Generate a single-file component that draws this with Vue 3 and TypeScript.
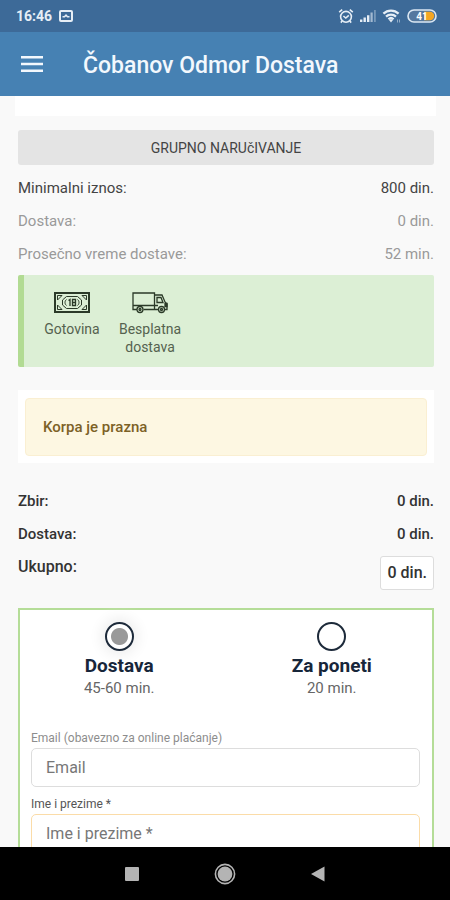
<script setup lang="ts">
import { ref } from 'vue'

interface Row {
  label: string
  value: string
  muted?: boolean
}

interface Mode {
  id: string
  title: string
  time: string
}

const terms: Row[] = [
  { label: 'Minimalni iznos:', value: '800 din.' },
  { label: 'Dostava:', value: '0 din.', muted: true },
  { label: 'Prosečno vreme dostave:', value: '52 min.', muted: true },
]

const totals: Row[] = [
  { label: 'Zbir:', value: '0 din.' },
  { label: 'Dostava:', value: '0 din.' },
]

const modes: Mode[] = [
  { id: 'delivery', title: 'Dostava', time: '45-60 min.' },
  { id: 'pickup', title: 'Za poneti', time: '20 min.' },
]

const mode = ref('delivery')
const email = ref('')
const fullName = ref('')
</script>

<template>
  <div class="screen">
    <div class="status">
      <div class="status-side">
        <span class="clock">16:46</span>
        <svg viewBox="0 0 14 12" width="14" height="12">
          <rect x="1" y="1" width="12" height="10" rx="1" fill="none" stroke="currentColor" stroke-width="2" />
          <path d="M3.500 6.800h2l1.500-1.600 1.500 1.600h2" fill="none" stroke="currentColor" stroke-width="1.600" />
        </svg>
      </div>
      <div class="status-side status-right">
        <svg viewBox="0 0 16 16" width="16" height="16" fill="none" stroke="currentColor" stroke-width="1.6">
          <circle cx="8" cy="8.8" r="5.4" />
          <path d="M1.2 4.2 4.2 1.6M14.8 4.2l-3-2.6M5.4 8l2.4 2 3-2.6M4.2 13l-1.4 1.6M11.8 13l1.4 1.6" />
        </svg>
        <svg viewBox="0 0 18 14" width="18" height="14" fill="currentColor">
          <path d="M1 10.5h2.4V13H1zM4.500 8.500h2.4V13H4.500zM8 6.300h2.4V13H8z" />
          <path d="M11.500 3.500h2.200V13h-2.200z" opacity=".6" />
          <path d="M15 1h1.800v12H15z" opacity=".35" />
        </svg>
        <svg viewBox="0 0 20 16" width="20" height="16">
          <path d="M1.4 5.6a11 11 0 0 1 15.2 0M4 8.6a7.2 7.2 0 0 1 10 0M6.4 11.2a3.8 3.8 0 0 1 5.2 0" fill="none" stroke="currentColor" stroke-width="2.200" />
          <path d="m9 14.5 2-2.4a3 3 0 0 0-4 0z" fill="currentColor" />
          <path d="M15.500 11.500v3M17.500 14.500v-3" stroke="currentColor" opacity=".5" />
        </svg>
        <svg viewBox="0 0 30 16" width="30" height="16">
          <rect x="1" y="2" width="28" height="12" rx="6" fill="#54789f" stroke="#dce8f3" stroke-width="1.6" />
          <path d="M17 3.8h6a4.2 4.2 0 0 1 0 8.4h-6z" fill="#f5a623" />
          <text x="15" y="11.6" text-anchor="middle" class="battery-text">41</text>
        </svg>
      </div>
    </div>

    <header class="app-bar">
      <button class="menu" type="button" aria-label="Meni">
        <svg viewBox="0 0 22 16" width="22" height="16">
          <path d="M0 1.200h22M0 8h22M0 14.800h22" stroke="currentColor" stroke-width="2.400" />
        </svg>
      </button>
      <h1>Čobanov Odmor Dostava</h1>
    </header>

    <main class="content">
      <div class="sheet-end"></div>

      <button class="group-order" type="button">GRUPNO NARUčIVANJE</button>

      <dl class="rows">
        <div v-for="row in terms" :key="row.label" class="row" :class="{ muted: row.muted }">
          <dt>{{ row.label }}</dt>
          <dd>{{ row.value }}</dd>
        </div>
      </dl>

      <ul class="perks">
        <li>
          <svg viewBox="0 0 36 22" width="36" height="22" fill="none" stroke="currentColor">
            <rect x="1" y="1" width="34" height="19" stroke-width="2" />
            <path d="M3.5 8V3.5H8zM32.5 8V3.5H28zM3.5 13v4.5H8zM32.5 13v4.5H28z" />
            <path d="M12.5 4.5h11l4 3.5v5l-4 3.500h-11l-4-3.500V8z" />
            <path d="M12.5 7.5c-2 1.500-2 4.500 0 6M23.500 7.500c2 1.500 2 4.500 0 6" />
            <path d="m14.500 8.500 1.500-1v6.500M18.500 7.500h3v6h-3zM18.500 10.500h3" stroke-width="1.3" />
          </svg>
          <span>Gotovina</span>
        </li>
        <li>
          <svg viewBox="0 0 36 22" width="36" height="22" fill="none" stroke="currentColor" stroke-width="1.3">
            <path d="M5 17.500H1V1h21.500v16.500H11.500M1 13.500h21.500M22.500 3H30l3 7 2 2v5.500h-2M26.500 17.500h-4" />
            <path d="M25 5.500h4l2 5h-6zM23 13.500h3" />
            <path d="M33 11.500h2v3h-2z" fill="currentColor" />
            <circle cx="8" cy="17.500" r="3" />
            <circle cx="8" cy="17.500" r="1" />
            <circle cx="29.500" cy="17.500" r="3" />
            <circle cx="29.500" cy="17.500" r="1" />
          </svg>
          <span>Besplatna dostava</span>
        </li>
      </ul>

      <section class="cart">
        <p>Korpa je prazna</p>
      </section>

      <dl class="rows totals">
        <div v-for="row in totals" :key="row.label" class="row">
          <dt>{{ row.label }}</dt>
          <dd>{{ row.value }}</dd>
        </div>
        <div class="row grand">
          <dt>Ukupno:</dt>
          <dd>0 din.</dd>
        </div>
      </dl>

      <form class="order" @submit.prevent>
        <div class="modes" role="radiogroup" aria-label="Način preuzimanja">
          <label v-for="m in modes" :key="m.id" class="mode">
            <input v-model="mode" type="radio" name="mode" :value="m.id" />
            <strong>{{ m.title }}</strong>
            <span>{{ m.time }}</span>
          </label>
        </div>

        <label class="field-label" for="email">Email (obavezno za online plaćanje)</label>
        <input id="email" v-model="email" class="field" type="email" placeholder="Email" />

        <label class="field-label required" for="full-name">Ime i prezime *</label>
        <input id="full-name" v-model="fullName" class="field pending" type="text" placeholder="Ime i prezime *" />
      </form>
    </main>

    <nav class="system-nav">
      <button type="button" aria-label="Nedavne aplikacije">
        <svg viewBox="0 0 22 22" width="22" height="22"><rect x="4" y="4" width="14" height="14" rx="1" fill="#b4b4b4" /></svg>
      </button>
      <button type="button" aria-label="Početni ekran">
        <svg viewBox="0 0 22 22" width="22" height="22">
          <circle cx="11" cy="11" r="9.6" fill="none" stroke="#b4b4b4" stroke-width="1.6" />
          <circle cx="11" cy="11" r="7.4" fill="#b4b4b4" />
        </svg>
      </button>
      <button type="button" aria-label="Nazad">
        <svg viewBox="0 0 22 22" width="22" height="22"><path d="M17.500 3.500v15L4 11z" fill="#b4b4b4" /></svg>
      </button>
    </nav>
  </div>
</template>

<style>
body {
  margin: 0;
  background: #f9f9f9;
}
</style>

<style scoped>
* {
  box-sizing: border-box;
}

.screen {
  display: flex;
  flex-direction: column;
  height: 100vh;
  font-family: Roboto, "Liberation Sans", sans-serif;
  font-size: 14px;
  line-height: 18px;
  color: #444;
  background: #f9f9f9;
}

button {
  border: 0;
  padding: 0;
  font: inherit;
  color: inherit;
  background: none;
}

svg {
  display: block;
  flex: none;
}

h1,
p,
dl,
dd,
ul {
  margin: 0;
  padding: 0;
}

.status {
  display: flex;
  flex: none;
  align-items: center;
  justify-content: space-between;
  height: 32px;
  padding: 0 13px 0 16px;
  color: #e6eef6;
  background: #3d6a98;
}

.status-side {
  display: flex;
  align-items: center;
  gap: 7px;
}

.status-right {
  gap: 5px;
}

.clock {
  font-weight: 700;
}

.battery-text {
  font-size: 10px;
  font-weight: 700;
  fill: #fff;
}

.app-bar {
  display: flex;
  flex: none;
  align-items: center;
  gap: 40px;
  height: 64px;
  padding: 0 21px;
  color: #f3f8fd;
  background: #4681b3;
}

h1 {
  padding-top: 4px;
  font-size: 23px;
  line-height: 28px;
  font-weight: 500;
}

.content {
  flex: 1;
  min-height: 0;
  padding: 0 16px 0 18px;
  overflow: hidden;
}

.sheet-end {
  height: 20px;
  margin: 0 -2px 14px -3px;
  background: #fff;
}

.group-order {
  display: block;
  width: 100%;
  height: 35px;
  border-radius: 3px;
  background: #e4e4e4;
}

.rows {
  padding: 6px 0 5px;
  font-size: 15px;
}

.row {
  display: flex;
  align-items: center;
  justify-content: space-between;
  height: 33px;
}

.muted {
  color: #9a9a9a;
}

.perks {
  display: flex;
  gap: 10px;
  min-height: 92px;
  padding: 17px 14px 10px;
  border-left: 6px solid #b2db93;
  border-radius: 2px;
  color: #2b3a28;
  list-style: none;
  background: #dcefd5;
}

.perks li {
  display: flex;
  flex-direction: column;
  align-items: center;
  gap: 6px;
  width: 68px;
  text-align: center;
}

.perks span {
  color: #55624f;
}

.cart {
  margin: 23px 0 15px;
  padding: 8px 7px 7px;
  background: #fff;
}

.cart p {
  padding: 19px 17px;
  border: 1px solid #faefd2;
  border-radius: 4px;
  font-size: 15px;
  font-weight: 500;
  color: #7c6126;
  background: #fdf7e2;
}

.totals {
  font-weight: 500;
  color: #333;
}

.grand {
  align-items: flex-start;
  height: 53px;
  padding-top: 6px;
}

.grand dt {
  padding-top: 2px;
  font-size: 16px;
}

.grand dd {
  padding: 6px;
  border: 1px solid #ddd;
  border-radius: 3px;
  font-size: 16px;
  line-height: 20px;
  background: #fff;
}

.order {
  padding: 12px 12px 20px 11px;
  border: 2px solid #b5dd98;
  background: #fff;
}

.modes {
  display: grid;
  grid-template-columns: 1fr 1fr;
  margin: 0 -18px 32px;
}

.mode {
  display: flex;
  flex-direction: column;
  align-items: center;
  font-size: 15px;
  line-height: 20px;
  color: #666;
}

.mode input {
  width: 29px;
  height: 29px;
  margin: 0 0 3px;
  border: 2px solid #1d2a3a;
  border-radius: 50%;
  appearance: none;
  background: #fff;
}

.mode input:checked {
  background: radial-gradient(circle, #999 8px, #fff 9px);
  box-shadow: 0 0 14px 4px #eee;
}

.mode strong {
  font-size: 19px;
  line-height: 24px;
  font-weight: 700;
  color: #17263a;
}

.field-label {
  display: block;
  padding-bottom: 2px;
  font-size: 12px;
  line-height: 16px;
  color: #8d8d8d;
}

.required {
  color: #555;
}

.field {
  display: block;
  width: 100%;
  height: 39px;
  margin-bottom: 9px;
  padding: 0 14px;
  border: 1px solid #ddd;
  border-radius: 5px;
  font: inherit;
  font-size: 16px;
  color: #444;
  background: #fff;
}

.field::placeholder {
  color: #777;
  opacity: 1;
}

.field.pending {
  border-color: #fbdca8;
}

.system-nav {
  display: flex;
  flex: none;
  align-items: center;
  justify-content: center;
  gap: 71px;
  height: 53px;
  background: #000;
}
</style>
